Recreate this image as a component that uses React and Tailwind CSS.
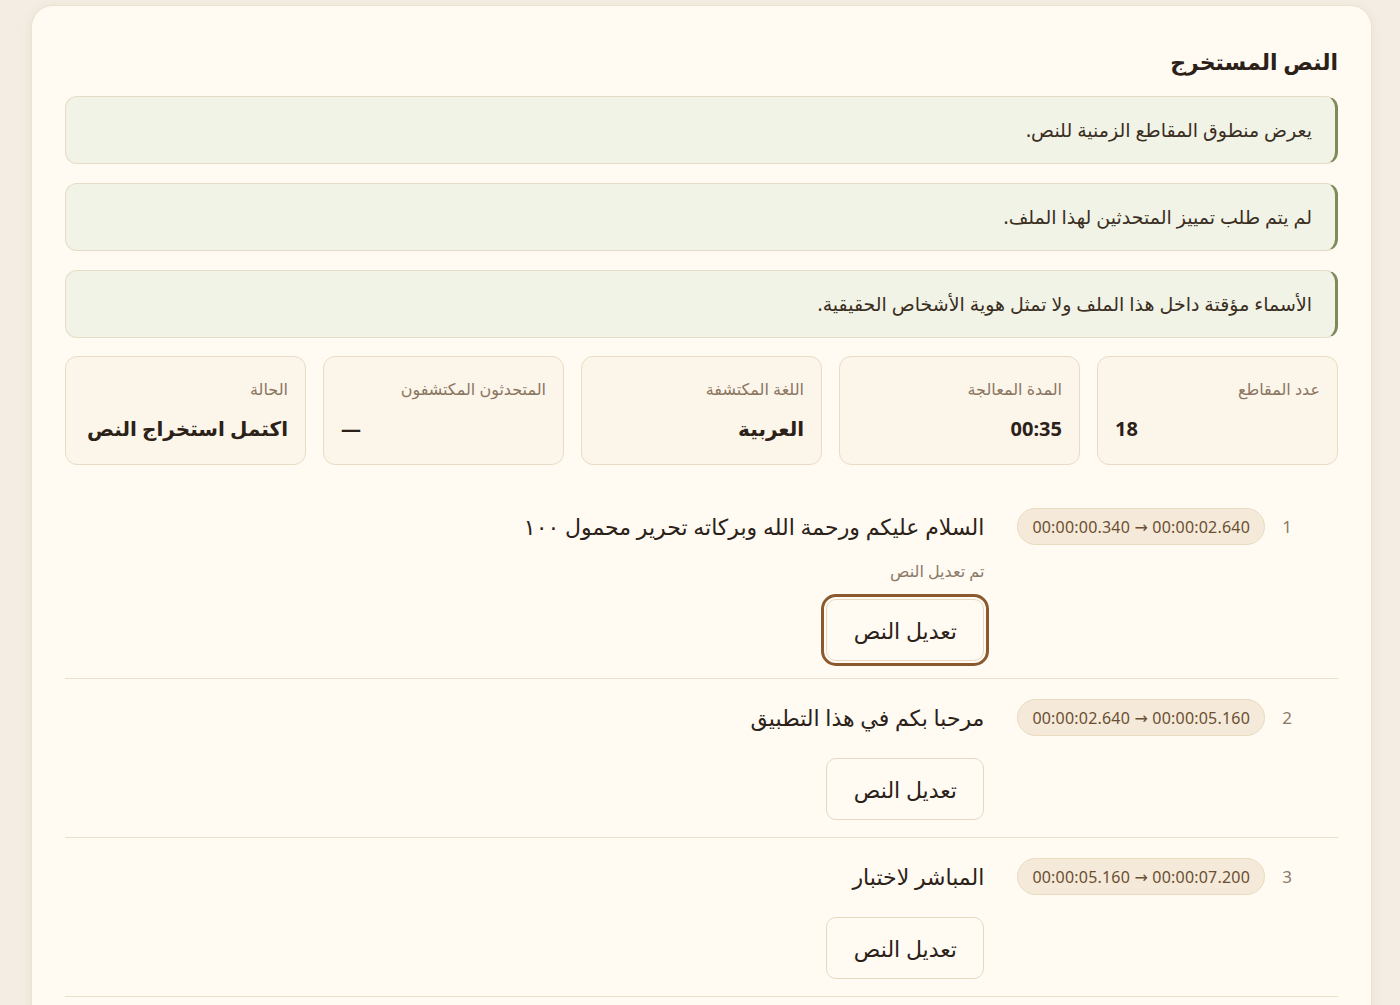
const notices = [
  'يعرض منطوق المقاطع الزمنية للنص.',
  'لم يتم طلب تمييز المتحدثين لهذا الملف.',
  'الأسماء مؤقتة داخل هذا الملف ولا تمثل هوية الأشخاص الحقيقية.',
];

const stats = [
  { label: 'عدد المقاطع', value: '18', ltr: true },
  { label: 'المدة المعالجة', value: '00:35' },
  { label: 'اللغة المكتشفة', value: 'العربية' },
  { label: 'المتحدثون المكتشفون', value: '—', ltr: true },
  { label: 'الحالة', value: 'اكتمل استخراج النص' },
];

const segments = [
  {
    n: 1,
    time: '00:00:00.340 → 00:00:02.640',
    text: 'السلام عليكم ورحمة الله وبركاته تحرير محمول ١٠٠',
    edited: true,
  },
  { n: 2, time: '00:00:02.640 → 00:00:05.160', text: 'مرحبا بكم في هذا التطبيق' },
  { n: 3, time: '00:00:05.160 → 00:00:07.200', text: 'المباشر لاختبار' },
];

function Segment({ seg }) {
  return (
    <div className="flex items-start border-b border-[#eadfcb] pt-[20px] pb-[17px] pr-[37px]">
      <div className="w-[28px] h-[37px] flex items-center justify-center text-[17px] text-[#8a7a68]">
        {seg.n}
      </div>
      <div className="mr-[8px] h-[37px] px-[14px] flex items-center rounded-full border border-[#eadbc0] bg-[#f5ead9] text-[16px] text-[#6b4f33]" dir="ltr">
        <span className="tracking-[0.2px]">{seg.time}</span>
      </div>
      <div className="mr-[33px] flex flex-1 flex-col items-start">
        <div className="h-[37px] flex items-center text-[22px] text-[#2b2118] whitespace-nowrap">{seg.text}</div>
        {seg.edited && (
          <div className="mt-[15px] text-[16px] leading-[22px] text-[#8a7a68]">تم تعديل النص</div>
        )}
        <button
          className={
            seg.edited
              ? 'mt-[17px] h-[62px] w-[158px] rounded-[10px] border border-[#e6d9c2] bg-[#fffbf3] text-[22px] font-medium text-[#2b2118] outline-[3px] outline-solid outline-[#8a5a2e] outline-offset-2'
              : 'mt-[22px] h-[62px] w-[158px] rounded-[10px] border border-[#e6d9c2] bg-[#fffbf3] text-[22px] font-medium text-[#2b2118]'
          }
        >
          تعديل النص
        </button>
      </div>
    </div>
  );
}

export default function App() {
  return (
    <div
      className="min-h-screen bg-[#f3ede3] pt-[5px]"
      style={{ fontFamily: '"Noto Sans", "DejaVu Sans", sans-serif' }}
    >
      <div
        dir="rtl"
        className="ml-[31px] w-[1341px] rounded-t-[22px] border border-[#ece2d0] bg-[#fffaf2] px-[33px] pt-[40px] pb-[20px] shadow-[0_2px_12px_rgba(120,90,50,0.08)]"
      >
        <h2 className="text-[22px] font-bold text-[#2b2118] leading-[30px]">النص المستخرج</h2>

        <div className="mt-[20px] flex flex-col gap-[19px]">
          {notices.map((t) => (
            <div
              key={t}
              className="h-[68px] flex items-center rounded-[12px] border border-[#e6dcc5] border-r-[3px] border-r-[#7d8a5a] bg-[#f1f3e6] pr-[23px] text-[19px] text-[#3a2e22]"
            >
              {t}
            </div>
          ))}
        </div>

        <div className="mt-[18px] grid grid-cols-5 gap-[17px]">
          {stats.map((s) => (
            <div
              key={s.label}
              className="h-[109px] rounded-[12px] border border-[#eadcc4] bg-[#fcf5ea] px-[17px] pt-[20px]"
            >
              <div className="text-[16px] text-[#8a7560]">{s.label}</div>
              <div
                className={
                  s.ltr
                    ? 'mt-[13px] whitespace-nowrap text-left text-[20px] font-bold text-[#2b2118]'
                    : 'mt-[13px] whitespace-nowrap text-[20px] font-bold text-[#2b2118]'
                }
              >
                {s.value}
              </div>
            </div>
          ))}
        </div>

        <div className="mt-[23px]">
          {segments.map((s) => (
            <Segment key={s.n} seg={s} />
          ))}
        </div>
      </div>
    </div>
  );
}
